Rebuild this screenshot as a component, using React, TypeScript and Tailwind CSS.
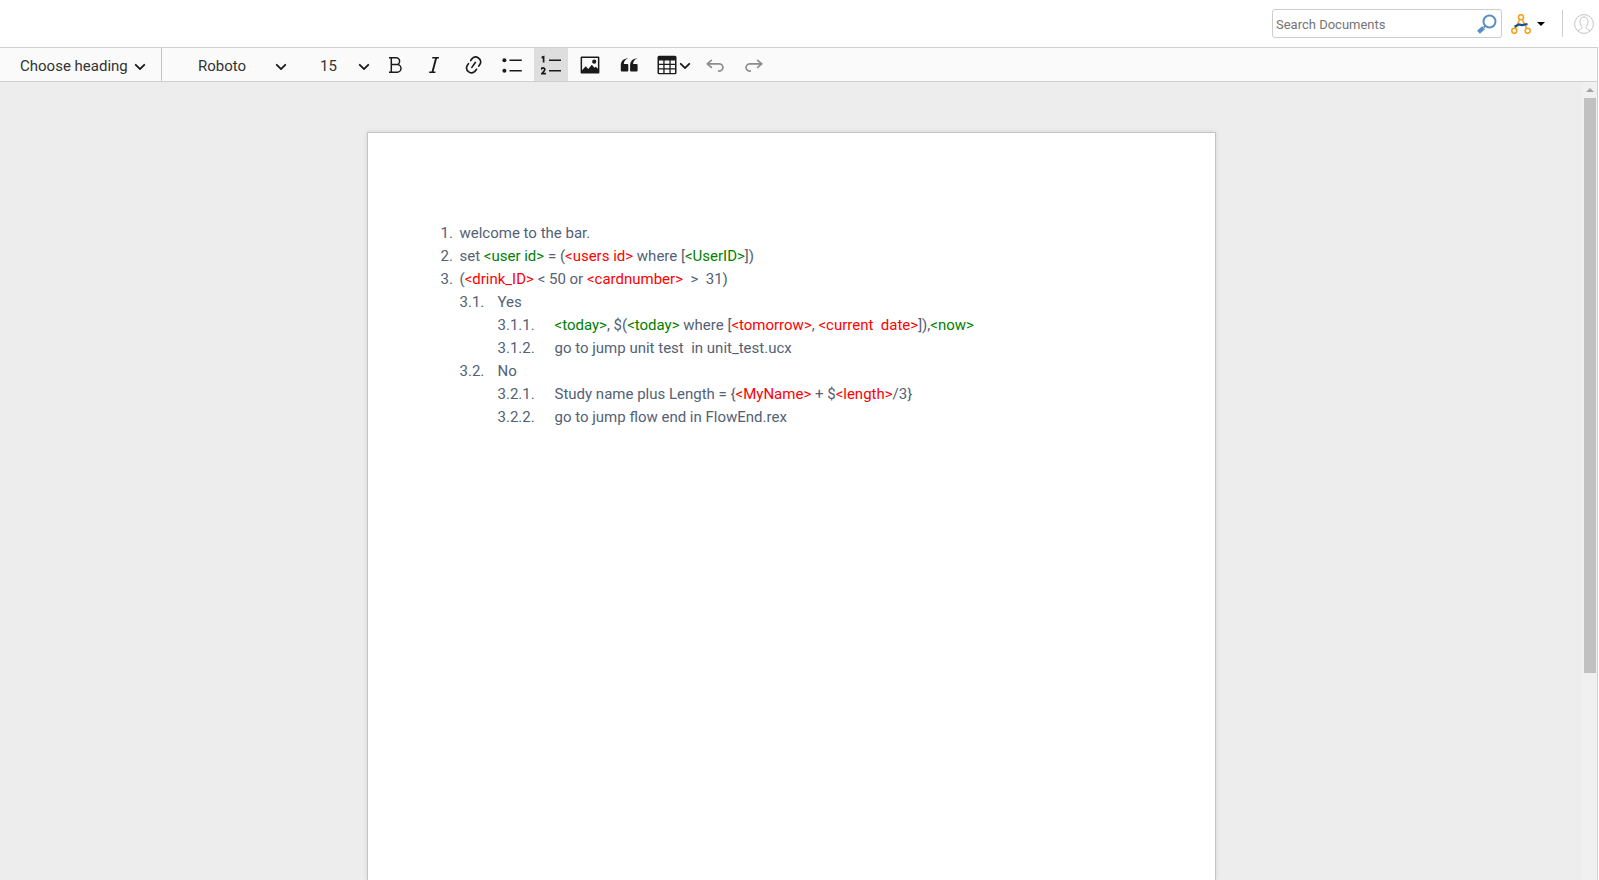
import type { ReactNode } from "react";

const CHEVRON =
  "M.941 4.523a.75.75 0 1 1 1.06-1.06l3.006 3.005 3.005-3.005a.75.75 0 1 1 1.06 1.06l-3.549 3.55a.75.75 0 0 1-1.168-.136L.941 4.523z";
const UNDO =
  "m5.042 9.367 2.189 1.837a.75.75 0 0 1-.965 1.149l-3.788-3.18a.747.747 0 0 1-.21-.284.75.75 0 0 1 .17-.945L6.23 4.762a.75.75 0 1 1 .964 1.15L4.863 7.866h8.917A.75.75 0 0 1 14 7.9a4 4 0 1 1-1.477 7.718l.344-1.489a2.5 2.5 0 1 0 1.094-4.73l.008-.032H5.042z";
const LINK =
  "m11.077 15 .991-1.416a.75.75 0 1 1 1.229.86l-1.148 1.64a.748.748 0 0 1-.217.206 5.251 5.251 0 0 1-8.503-5.955.741.741 0 0 1 .12-.274l1.147-1.639a.75.75 0 1 1 1.228.86L4.933 10.7l.006.003a3.75 3.75 0 0 0 6.132 4.294l.006.004zm5.494-5.335a.748.748 0 0 1-.12.274l-1.147 1.639a.75.75 0 1 1-1.228-.86l.86-1.23a3.75 3.75 0 0 0-6.144-4.301l-.86 1.229a.75.75 0 0 1-1.229-.86l1.148-1.64a.748.748 0 0 1 .217-.206 5.251 5.251 0 0 1 8.503 5.955zm-4.563-2.532a.75.75 0 0 1 .184 1.045l-3.155 4.505a.75.75 0 1 1-1.229-.86l3.155-4.506a.75.75 0 0 1 1.045-.184z";

function Chevron() {
  return (
    <svg viewBox="0 0 10 10" className="size-3 shrink-0 text-[#1a1a1a]" fill="currentColor" aria-hidden="true">
      <path d={CHEVRON} />
    </svg>
  );
}

function Tool({ label, active, disabled, children }: { label: string; active?: boolean; disabled?: boolean; children: ReactNode }) {
  return (
    <button
      type="button"
      aria-label={label}
      disabled={disabled}
      className={
        "flex h-full w-[34px] shrink-0 items-center justify-center disabled:text-[#8c8c8c] " + (active ? "bg-[#dedede]" : "")
      }
    >
      <svg viewBox="0 0 20 20" className="size-5" fill="currentColor" aria-hidden="true">
        {children}
      </svg>
    </button>
  );
}

function V({ tone, children }: { tone: "green" | "red"; children: ReactNode }) {
  return <span className={tone === "green" ? "text-[#008000]" : "text-[#ff0000]"}>{"<"}{children}{">"}</span>;
}

function Item({ n, gap, children, sub }: { n: string; gap: string; children: ReactNode; sub?: ReactNode }) {
  return (
    <li>
      <div className="flex">
        <span className={"shrink-0 " + gap}>{n}</span>
        <span className="whitespace-pre-wrap">{children}</span>
      </div>
      {sub}
    </li>
  );
}

function Toolbar() {
  return (
    <div role="toolbar" aria-label="Editor toolbar" className="flex h-[34px] shrink-0 items-center border-b border-[#cfcfcf] bg-[#fafafa] text-[#1a1a1a]">
      <button type="button" className="flex h-full w-[162px] items-center gap-[6px] border-r border-[#c4c4c4] pl-5 pt-[3px] text-[#333]">
        <span className="overflow-hidden leading-4">Choose heading</span>
        <Chevron />
      </button>
      <button type="button" className="flex h-full w-[125px] items-center justify-between pl-9 pt-[3px] text-[#333]">
        <span className="leading-4">Roboto</span>
        <Chevron />
      </button>
      <button type="button" className="ml-[33px] mr-2 flex h-full w-[50px] items-center justify-between pt-[3px] text-[#333]">
        <span className="leading-4">15</span>
        <Chevron />
      </button>
      <div className="flex h-full gap-[5px]">
        <Tool label="Bold">
          <path fill="none" stroke="currentColor" strokeWidth="1.5" d="M4 2.8h7.2a3.4 3.4 0 0 1 0 6.8H6.3M6.3 2.8v14.4M4 17.2h8.2a3.8 3.8 0 0 0 0-7.6h-1" />
        </Tool>
        <Tool label="Italic">
          <path fill="none" stroke="currentColor" strokeWidth="1.6" d="M8.200 2.800h6.800M5.200 17.200h6.200" />
          <path fill="none" stroke="currentColor" strokeWidth="1.900" d="M12.200 2.800 8.400 17.200" />
        </Tool>
        <Tool label="Link">
          <path transform="translate(-.3 -1) scale(1.090)" d={LINK} />
        </Tool>
        <Tool label="Bulleted List">
          <circle cx="2.4" cy="5.2" r="2" />
          <circle cx="2.4" cy="15.800" r="2" />
          <path d="M7.500 4.500h12.300V6H7.500zM7.500 15h12.300v1.500H7.500z" />
        </Tool>
        <Tool label="Numbered List" active>
          <path d="M8 4.500h12V6H8zM8 15h12v1.500H8z" />
          <path fill="none" stroke="currentColor" strokeWidth="1.700" d="M.6 2.600 2.600 1.700V7.500M.3 14.800c0-2.600 3.700-2.400 3.500-.2-.2 1.200-1.600 2.400-3 4h4.200" />
        </Tool>
        <Tool label="Insert image">
          <path fillRule="evenodd" d="M1.600 1.500h16.800q1 0 1 1v15q0 1-1 1H1.600q-1 0-1-1v-15q0-1 1-1zM2.100 3v12.200l3.600-3.900 2.600 2.600 3.500-4.200 2.600 3 1.400-1 2.100 2.100V3zM14.200 4.600a2.100 2.100 0 1 1 0 4.200 2.100 2.100 0 0 1 0-4.200z" />
        </Tool>
        <Tool label="Block quote">
          <path d="M9.300 3.400C6 4.200 4.900 6.400 4.800 9H8.300q1 0 1 1v5.600q0 1-1 1H2.800q-1 0-1-1V10.500C1.800 6 4.300 3.400 9.300 3.400zM18.600 3.400C15.300 4.200 14.200 6.400 14.100 9H17.600q1 0 1 1v5.600q0 1-1 1H12.100q-1 0-1-1V10.500C11.100 6 13.600 3.400 18.600 3.400z" />
        </Tool>
        <button type="button" aria-label="Insert table" className="flex h-full w-[42px] items-center justify-center gap-[2px] pl-1">
          <svg viewBox="0 0 20 20" className="size-5 shrink-0" fill="currentColor" aria-hidden="true">
            <path fillRule="evenodd" d="M2 .8h16q1.500 0 1.500 1.500v15.500q0 1.500-1.500 1.500H2Q.5 19.300.5 17.800V2.300Q.5.800 2 .800zM2 5.500v3.300h4.300V5.500zm5.600 0v3.300h4.800V5.500zm6.100 0v3.300H18V5.500zM2 10v3.300h4.300V10zm5.600 0v3.300h4.800V10zm6.100 0v3.300H18V10zM2 14.600V18h4.300v-3.400zm5.600 0V18h4.800v-3.400zm6.100 0V18H18v-3.400z" />
          </svg>
          <Chevron />
        </button>
        <Tool label="Undo" disabled>
          <path transform="translate(-1 -.6) scale(1.100)" d={UNDO} />
        </Tool>
        <Tool label="Redo" disabled>
          <path transform="matrix(-1.100 0 0 1.100 21 -.6)" d={UNDO} />
        </Tool>
      </div>
    </div>
  );
}

export default function App() {
  return (
    <div className="flex h-screen flex-col overflow-hidden bg-white font-[Roboto,sans-serif] text-[15px] leading-[23px]">
      <header className="flex h-[47px] shrink-0 items-center justify-end pr-[5px]">
        <div className="flex h-[29px] w-[230px] items-center rounded-[3px] border border-[#ccc] pl-[3px] pr-1">
          <input type="text" aria-label="Search Documents" placeholder="Search Documents" className="min-w-0 flex-1 pt-px text-[13px] outline-none placeholder:text-[#757575]" />
          <button type="button" aria-label="Search">
            <svg viewBox="0 0 20 20" className="size-5" fill="none" stroke="#5b8ec4" aria-hidden="true">
              <circle cx="12.500" cy="7.500" r="6" strokeWidth="2" />
              <path d="m8.300 12-1.600 1.500" strokeWidth="2" />
              <path d="m6.500 13.700-5 4.600" strokeWidth="4.200" />
            </svg>
          </button>
        </div>
        <button type="button" aria-label="Workspace" className="ml-[9px] flex items-center gap-[6px]">
          <svg viewBox="0 0 20 20" className="size-5" fill="none" stroke="#f9a11b" strokeWidth="1.600" aria-hidden="true">
            <circle cx="10" cy="3.200" r="2.500" />
            <circle cx="3.300" cy="16.800" r="2.500" />
            <circle cx="16.700" cy="16.800" r="2.500" />
            <path d="M8.800 5.500 4.300 14.500M11.200 5.500l4.500 9" />
            <path d="M3.500 12.800 8 10.500l3 .6 5.500-1" stroke="#17508f" strokeWidth="2.200" />
          </svg>
          <svg viewBox="0 0 8 4" className="h-1 w-2" aria-hidden="true"><path d="M0 0h8L4 4z" /></svg>
        </button>
        <div className="ml-[17px] h-[27px] w-px bg-[#ccc]" />
        <button type="button" aria-label="Account" className="ml-[11px]">
          <svg viewBox="0 0 20 20" className="size-5" fill="none" stroke="#c4c4c4" aria-hidden="true">
            <circle cx="10" cy="10" r="9.400" />
            <path d="M4 17c1-1.800 4-1.500 4-3.500 0-1-2-2.500-2-6C6 4.500 7.500 3 10 3s4 1.500 4 4.500c0 3.500-2 5-2 6 0 2 3 1.700 4 3.500" />
          </svg>
        </button>
      </header>
      <main className="mr-px flex min-h-0 flex-1 flex-col border-r border-t border-[#cfcfcf]">
        <Toolbar />
        <div className="flex min-h-0 flex-1 bg-[#ededed]">
          <div className="min-w-0 flex-1 overflow-hidden pt-[50px]">
            <article className="mx-auto min-h-full w-full max-w-[849px] border border-b-0 border-[#c4c4c4] bg-white px-[73px] pt-[89px] text-[#536176] shadow-[0_0_5px_rgba(0,0,0,0.1)]">
              <ol>
                <Item n="1." gap="w-[19px]">welcome to the bar.</Item>
                <Item n="2." gap="w-[19px]">
                  set <V tone="green">user id</V> = (<V tone="red">users id</V> where [<V tone="green">UserID</V>])
                </Item>
                <Item
                  n="3."
                  gap="w-[19px]"
                  sub={
                    <ol className="pl-[19px]">
                      <Item
                        n="3.1."
                        gap="w-[38px]"
                        sub={
                          <ol className="pl-[38px]">
                            <Item n="3.1.1." gap="w-[57px]">
                              <V tone="green">today</V>, $(<V tone="green">today</V> where [<V tone="red">tomorrow</V>, <V tone="red">current{"  "}date</V>]),<V tone="green">now</V>
                            </Item>
                            <Item n="3.1.2." gap="w-[57px]">go to jump unit test{"  "}in unit_test.ucx</Item>
                          </ol>
                        }
                      >
                        Yes
                      </Item>
                      <Item
                        n="3.2."
                        gap="w-[38px]"
                        sub={
                          <ol className="pl-[38px]">
                            <Item n="3.2.1." gap="w-[57px]">
                              Study name plus Length = {"{"}<V tone="red">MyName</V> + $<V tone="red">length</V>/3{"}"}
                            </Item>
                            <Item n="3.2.2." gap="w-[57px]">go to jump flow end in FlowEnd.rex</Item>
                          </ol>
                        }
                      >
                        No
                      </Item>
                    </ol>
                  }
                >
                  (<V tone="red">drink_ID</V> {"<"} 50 or <V tone="red">cardnumber</V>{"  >  "}31)
                </Item>
              </ol>
            </article>
          </div>
          <div className="flex w-[15px] shrink-0 flex-col items-center bg-[#f0f0f0]" aria-hidden="true">
            <div className="flex h-4 shrink-0 items-center justify-center">
              <svg viewBox="0 0 8 4" className="h-1 w-2" fill="#a3a3a3"><path d="M0 4h8L4 0z" /></svg>
            </div>
            <div className="h-[72%] w-3 bg-[#c1c1c1]" />
          </div>
        </div>
      </main>
    </div>
  );
}
